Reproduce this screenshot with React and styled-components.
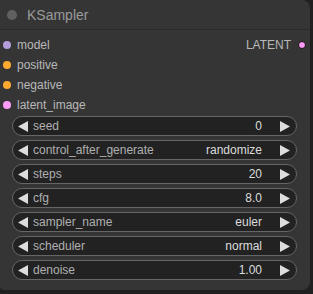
import React from "react";
import styled, { createGlobalStyle } from "styled-components";

const Global = createGlobalStyle`
  html, body {
    margin: 0;
    padding: 0;
    background: #202020;
    font-family: Arial, "Liberation Sans", sans-serif;
  }
`;

const Node = styled.div`
  width: 310px;
  height: 290px;
  background: #353535;
  border-radius: 0 8px 8px 4px;
  box-sizing: border-box;
  overflow: hidden;
  display: flex;
  flex-direction: column;
`;

const Title = styled.div`
  height: 30px;
  display: flex;
  align-items: center;
  padding-left: 7px;
  gap: 10px;
  border-bottom: 1px solid #2a2a2a;
  box-sizing: border-box;
  color: #9a9a9a;
  font-size: 14px;
`;

const TitleDot = styled.span`
  width: 10px;
  height: 10px;
  border-radius: 50%;
  background: #606060;
`;

const Slots = styled.div`
  padding-top: 5px;
  display: flex;
  flex-direction: column;
`;

const SlotRow = styled.div`
  height: 20px;
  display: flex;
  align-items: center;
  justify-content: space-between;
  font-size: 12px;
  color: #b8b8b8;
`;

const Slot = styled.div`
  display: flex;
  align-items: center;
  gap: ${p => (p.$out ? "7px" : "6px")};
  padding: ${p => (p.$out ? "0 4px 0 0" : "0 0 0 3px")};
`;

const Dot = styled.span`
  width: 8px;
  height: 8px;
  border-radius: 50%;
  box-sizing: border-box;
  background: ${p => p.$color};
  border: ${p => (p.$out ? "1px solid #111" : "none")};
`;

const Widgets = styled.div`
  display: flex;
  flex-direction: column;
  gap: 4px;
  padding: 1px 13px 0 12px;
`;

const Widget = styled.div`
  height: 20px;
  box-sizing: border-box;
  border: 1px solid #666;
  border-radius: 10px;
  background: #222;
  display: flex;
  align-items: center;
  padding: 0 6px 0 5px;
  font-size: 12px;
`;

const Label = styled.span`
  flex: 1;
  color: #b0b0b0;
  margin-left: 5px;
`;

const Value = styled.span`
  color: #ddd;
  margin-right: 18px;
`;

const Arrow = ({ dir }) => (
  <svg width="10" height="11" viewBox="0 0 10 11">
    <path d={dir === "left" ? "M10 0 L0 5.5 L10 11 Z" : "M0 0 L10 5.5 L0 11 Z"} fill="#ddd" />
  </svg>
);

const inputs = [
  { name: "model", color: "#b39ddb" },
  { name: "positive", color: "#ffa931" },
  { name: "negative", color: "#ffa931" },
  { name: "latent_image", color: "#ff9cf9" },
];

const widgets = [
  ["seed", "0"],
  ["control_after_generate", "randomize"],
  ["steps", "20"],
  ["cfg", "8.0"],
  ["sampler_name", "euler"],
  ["scheduler", "normal"],
  ["denoise", "1.00"],
];

export default function App() {
  return (
    <>
      <Global />
      <Node>
        <Title>
          <TitleDot />
          KSampler
        </Title>
        <Slots>
          {inputs.map((s, i) => (
            <SlotRow key={s.name}>
              <Slot>
                <Dot $color={s.color} />
                {s.name}
              </Slot>
              {i === 0 && (
                <Slot $out>
                  LATENT
                  <Dot $out $color="#ff9cf9" />
                </Slot>
              )}
            </SlotRow>
          ))}
        </Slots>
        <Widgets>
          {widgets.map(([label, value]) => (
            <Widget key={label}>
              <Arrow dir="left" />
              <Label>{label}</Label>
              <Value>{value}</Value>
              <Arrow dir="right" />
            </Widget>
          ))}
        </Widgets>
      </Node>
    </>
  );
}
